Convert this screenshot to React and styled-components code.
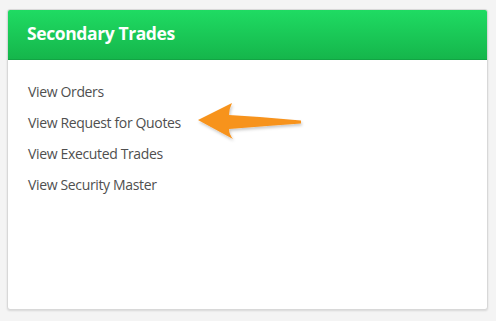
import React from 'react'
import styled, { createGlobalStyle } from 'styled-components'

const GlobalStyle = createGlobalStyle`
  html, body {
    margin: 0;
    padding: 0;
    background: #f4f4f4;
  }
  body {
    font-family: "Open Sans", "Liberation Sans", sans-serif;
  }
`

const links = [
  'View Orders',
  'View Request for Quotes',
  'View Executed Trades',
  'View Security Master',
]

export default function App() {
  return (
    <>
      <GlobalStyle />
      <Page>
        <Card>
          <Header>
            <Title>Secondary Trades</Title>
          </Header>
          <Body>
            <LinkList>
              {links.map((label, index) => (
                <LinkItem key={index}>
                  <Link href="#">{label}</Link>
                  {index === 1 && <Arrow />}
                </LinkItem>
              ))}
            </LinkList>
          </Body>
        </Card>
      </Page>
    </>
  )
}

function Arrow() {
  return (
    <ArrowSvg width="110" height="44" viewBox="0 0 110 44">
      <defs>
        <filter id="sh" x="-10%" y="-20%" width="130%" height="150%">
          <feDropShadow dx="1" dy="2" stdDeviation="1.5" floodColor="#000" floodOpacity="0.22" />
        </filter>
      </defs>
      <path
        d="M2 19 L36 2 Q33 8 33 14 Q70 16 105 19.5 L105 22.5 Q70 25 33 28 Q33 33 37 38 Z"
        fill="#f7931e"
        filter="url(#sh)"
      />
    </ArrowSvg>
  )
}

const Page = styled.div`
  padding: 9px 8px 10px 7px;
  box-sizing: border-box;
  height: 321px;
`

const Card = styled.div`
  background: #fff;
  border: 1px solid #d8d8d8;
  border-radius: 3px;
  box-shadow: 0 1px 2px rgba(0, 0, 0, 0.12);
  height: 301px;
  box-sizing: border-box;
  overflow: hidden;
`

const Header = styled.div`
  height: 50px;
  background: linear-gradient(to bottom, #1fdb63 0%, #15b64b 100%);
  border-bottom: 1px solid #12a444;
  display: flex;
  align-items: center;
  padding: 0 19px;
  box-sizing: border-box;
`

const Title = styled.h2`
  margin: 0;
  color: #fff;
  font-family: "Open Sans", "Liberation Sans", sans-serif;
  font-weight: 700;
  font-size: 17.5px;
  letter-spacing: -0.4px;
  margin-top: -4px;
`

const Body = styled.div`
  padding: 20px 20px;
`

const LinkList = styled.ul`
  list-style: none;
  margin: 0;
  padding: 0;
  display: flex;
  flex-direction: column;
  gap: 9px;
`

const LinkItem = styled.li`
  position: relative;
  height: 22px;
  display: flex;
  align-items: center;
`

const Link = styled.a`
  color: #4f4f4f;
  text-decoration: none;
  font-size: 14px;
  letter-spacing: -0.35px;
  margin-top: 1px;
`

const ArrowSvg = styled.svg`
  position: absolute;
  left: 168px;
  top: -10px;
`
